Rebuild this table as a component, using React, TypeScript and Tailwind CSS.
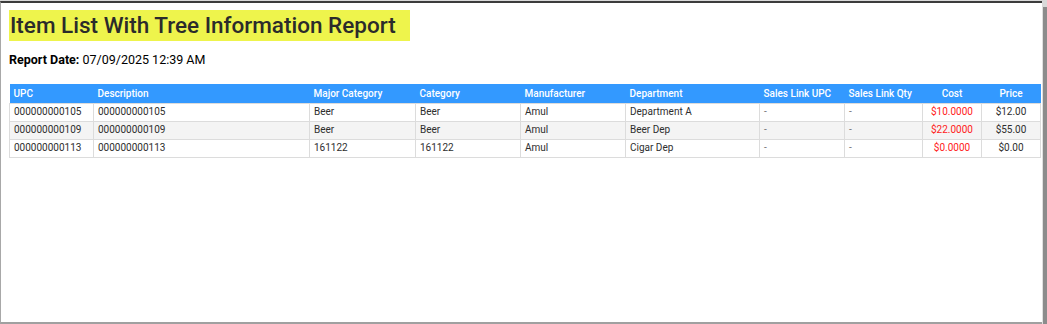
const columns = [
  { label: "UPC", width: "w-[84px]", align: "text-left" },
  { label: "Description", width: "w-[216px]", align: "text-left" },
  { label: "Major Category", width: "w-[106px]", align: "text-left" },
  { label: "Category", width: "w-[105px]", align: "text-left" },
  { label: "Manufacturer", width: "w-[105px]", align: "text-left" },
  { label: "Department", width: "w-[134px]", align: "text-left" },
  { label: "Sales Link UPC", width: "w-[85px]", align: "text-left" },
  { label: "Sales Link Qty", width: "w-[78px]", align: "text-left" },
  { label: "Cost", width: "w-[59px]", align: "text-center" },
  { label: "Price", width: "w-[59px]", align: "text-center" },
]

const rows = [
  ["000000000105", "000000000105", "Beer", "Beer", "Amul", "Department A", "-", "-", "$10.0000", "$12.00"],
  ["000000000109", "000000000109", "Beer", "Beer", "Amul", "Beer Dep", "-", "-", "$22.0000", "$55.00"],
  ["000000000113", "000000000113", "161122", "161122", "Amul", "Cigar Dep", "-", "-", "$0.0000", "$0.00"],
]

export default function App() {
  return (
    <div className="h-[324px] w-[1047px] bg-[#d9d9d9] pt-px font-['Roboto',sans-serif]">
      <div className="flex h-[323px]">
        <div className="flex-1 border-t-2 border-l border-b-2 border-t-[#3c3c3c] border-l-[#a8a8a8] border-b-[#a0a0a0] bg-white">
          {/* Report header */}
          <div className="pl-[8px] pt-[7px]">
            <h1 className="inline-block bg-[#eef44c] pl-[1px] pr-[14px] text-[22.5px] leading-[31px] font-medium text-[#2b2b2b]">
              Item List With Tree Information Report
            </h1>
            <p className="mt-[10px] text-[12.5px] leading-[18px] text-black">
              <span className="font-bold">Report Date:</span> 07/09/2025 12:39 AM
            </p>
          </div>

          {/* Table */}
          <div className="pl-[8px] pt-[15px]">
            <table className="w-[1031px] table-fixed border-collapse text-[10px] text-[#2e2e2e]">
              <thead>
                <tr className="h-[19px] bg-[#3399ff] text-white">
                  {columns.map((c) => (
                    <th key={c.label} className={`${c.width} ${c.align} px-[4px] font-medium`}>
                      {c.label}
                    </th>
                  ))}
                </tr>
              </thead>
              <tbody>
                {rows.map((r, i) => (
                  <tr key={i} className={`h-[18px] ${i === 1 ? "bg-[#f4f4f4]" : "bg-white"}`}>
                    {r.map((cell, j) => (
                      <td
                        key={j}
                        className={`border border-[#dcdcdc] px-[4px] leading-[16px] ${columns[j].align} ${
                          j === 8 ? "text-[#ff2020]" : ""
                        } ${j === 6 || j === 7 ? "text-[#777]" : ""}`}
                      >
                        {cell}
                      </td>
                    ))}
                  </tr>
                ))}
              </tbody>
            </table>
          </div>
        </div>
        <div className="mt-[6px] w-[5px] border-l border-l-[#e0e0e0] bg-[#8c8c8c]" />
      </div>
    </div>
  )
}
